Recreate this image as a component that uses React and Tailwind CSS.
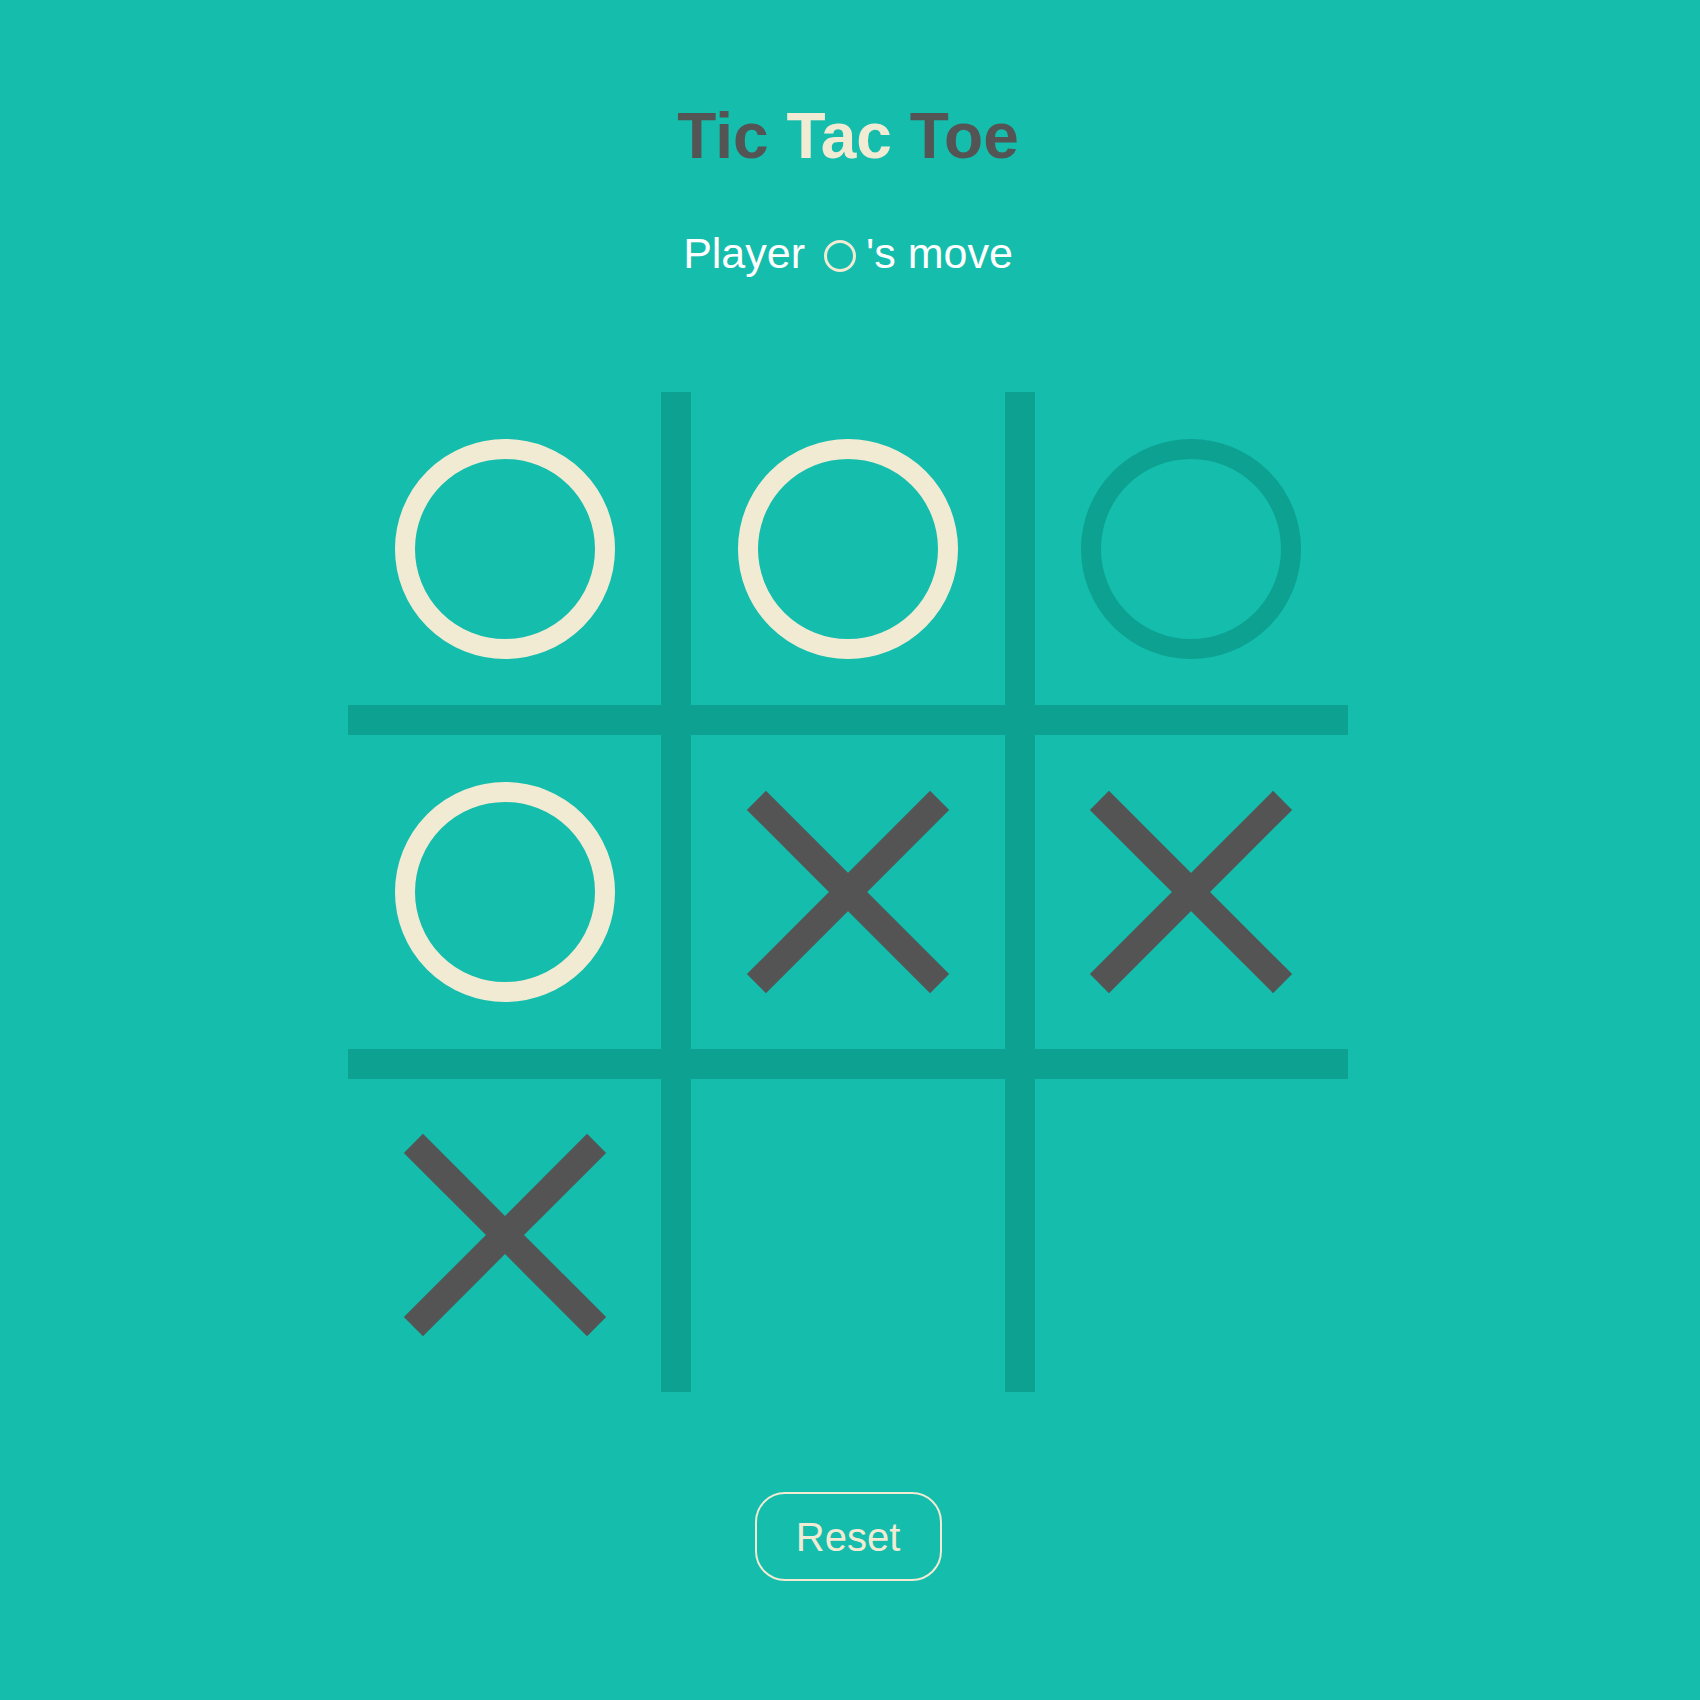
import { useState } from "react";

const board = ["O", "O", "ghost", "O", "X", "X", "X", null, null];

function Circle({ ghost }) {
  return (
    <div
      className={
        "h-[220px] w-[220px] rounded-full border-[20px] " +
        (ghost ? "border-[#0da192]" : "border-[#f2ebd3]")
      }
    />
  );
}

function Cross() {
  return (
    <svg width="220" height="220" viewBox="0 0 220 220">
      <line x1="18.4" y1="18.4" x2="201.6" y2="201.6" stroke="#545454" strokeWidth="27" />
      <line x1="201.6" y1="18.4" x2="18.4" y2="201.6" stroke="#545454" strokeWidth="27" />
    </svg>
  );
}

export default function App() {
  const [squares] = useState(board);

  return (
    <div className="min-h-screen w-full bg-[#14bdac] font-['Liberation_Sans',Arial,sans-serif]">
      <div className="flex flex-col items-center pr-[4px] pt-[104px] pb-[119px]">
        <h1 className="text-[64px] font-bold leading-none text-[#545454]">
          Tic <span className="text-[#f2ebd3]">Tac</span> Toe
        </h1>

        <div className="mt-[64px] flex items-center text-[43px] leading-none text-white">
          <span>Player</span>
          <span className="ml-[19px] mt-[4px] inline-block h-[32px] w-[32px] rounded-full border-[3px] border-[#f2ebd3]" />
          <span className="ml-[10px]">'s move</span>
        </div>

        <div className="mt-[117px] grid h-[1000px] w-[1000px] grid-cols-3 grid-rows-3 gap-[30px] bg-[#0da192]">
          {squares.map((value, i) => (
            <div key={i} className="flex items-center justify-center bg-[#14bdac]">
              {value === "O" && <Circle />}
              {value === "ghost" && <Circle ghost />}
              {value === "X" && <Cross />}
            </div>
          ))}
        </div>

        <button
          type="button"
          className="mt-[100px] flex h-[89px] w-[187px] items-center justify-center rounded-[30px] border-2 border-[#f2ebd3] text-[40px] leading-none text-[#f2ebd3]"
        >
          Reset
        </button>
      </div>
    </div>
  );
}
